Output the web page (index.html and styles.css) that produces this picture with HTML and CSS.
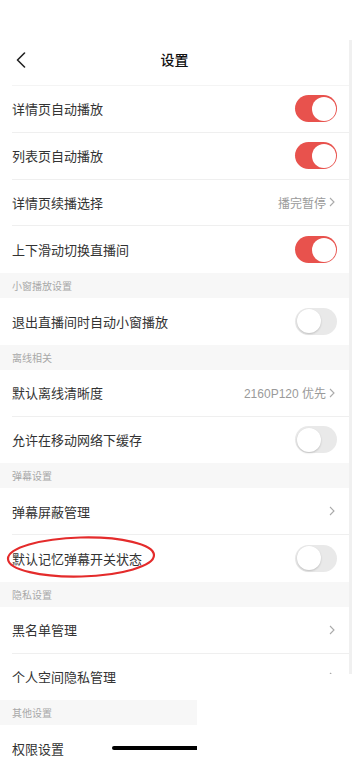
FILE: index.html
```html
<!DOCTYPE html>
<html lang="zh-CN">
<head>
    <meta charset="UTF-8">
    <meta name="viewport" content="width=device-width, initial-scale=1.0">
    <title>设置</title>
    <link rel="stylesheet" href="styles.css">
</head>
<body>
    <div class="status"></div>
    <div class="screen">
        <div class="nav">
            <svg class="nav__back" width="10" height="16" viewBox="0 0 10 16"><polyline points="8.5,1 1.5,8 8.5,15" fill="none" stroke="#222" stroke-width="1.6" stroke-linecap="round" stroke-linejoin="round"/></svg>
            <div class="nav__title">设置</div>
        </div>

        <div class="group">
            <div class="row"><span class="row__label">详情页自动播放</span><span class="switch switch--on"></span></div>
            <div class="row"><span class="row__label">列表页自动播放</span><span class="switch switch--on"></span></div>
            <div class="row"><span class="row__label">详情页续播选择</span><span class="row__value">播完暂停<svg class="chev" width="6" height="10" viewBox="0 0 6 10"><polyline points="1,1 5,5 1,9" fill="none" stroke="#aaa" stroke-width="1.1"/></svg></span></div>
            <div class="row"><span class="row__label">上下滑动切换直播间</span><span class="switch switch--on"></span></div>
        </div>

        <div class="section">小窗播放设置</div>
        <div class="group">
            <div class="row"><span class="row__label">退出直播间时自动小窗播放</span><span class="switch"></span></div>
        </div>

        <div class="section">离线相关</div>
        <div class="group">
            <div class="row"><span class="row__label">默认离线清晰度</span><span class="row__value">2160P120 优先<svg class="chev" width="6" height="10" viewBox="0 0 6 10"><polyline points="1,1 5,5 1,9" fill="none" stroke="#aaa" stroke-width="1.1"/></svg></span></div>
            <div class="row"><span class="row__label">允许在移动网络下缓存</span><span class="switch"></span></div>
        </div>

        <div class="section">弹幕设置</div>
        <div class="group">
            <div class="row"><span class="row__label">弹幕屏蔽管理</span><span class="row__value"><svg class="chev" width="6" height="10" viewBox="0 0 6 10"><polyline points="1,1 5,5 1,9" fill="none" stroke="#aaa" stroke-width="1.1"/></svg></span></div>
            <div class="row"><span class="row__label">默认记忆弹幕开关状态</span><span class="switch"></span></div>
        </div>

        <div class="section">隐私设置</div>
        <div class="group">
            <div class="row"><span class="row__label">黑名单管理</span><span class="row__value"><svg class="chev" width="6" height="10" viewBox="0 0 6 10"><polyline points="1,1 5,5 1,9" fill="none" stroke="#aaa" stroke-width="1.1"/></svg></span></div>
            <div class="row"><span class="row__label">个人空间隐私管理</span><span class="row__value"><svg class="chev" width="6" height="10" viewBox="0 0 6 10"><polyline points="1,1 5,5 1,9" fill="none" stroke="#aaa" stroke-width="1.1"/></svg></span></div>
        </div>

        <div class="section">其他设置</div>
        <div class="group">
            <div class="row"><span class="row__label">权限设置</span></div>
        </div>
    </div>

    <div class="cover"></div>
    <div class="home"></div>
    <svg class="mark" width="152" height="44" viewBox="0 0 152 44"><ellipse cx="76" cy="21" rx="73" ry="19.5" fill="none" stroke="#e42b2b" stroke-width="2.2" transform="rotate(-1.5 76 21)"/></svg>
</body>
</html>
```

FILE: styles.css
```css
*{
    padding: 0;
    margin: 0;
    box-sizing: border-box;
}
body{
    width: 352px;
    height: 758px;
    overflow: hidden;
    background-color: #fff;
    font-family: "Noto Sans CJK SC", "Noto Sans", sans-serif;
    color: #333;
    position: relative;
}
.status{
    height: 40px;
}
.screen{
    width: 352px;
    border-right: 3px solid #f0f0f0;
}
.nav{
    height: 46px;
    padding-bottom: 8px;
    display: flex;
    align-items: center;
    justify-content: center;
    position: relative;
    border-bottom: 1px solid #f4f4f4;
    margin-left: 12px;
}
.nav__back{
    position: absolute;
    left: 4px;
    top: 12px;
}
.nav__title{
    font-size: 14px;
    font-weight: 500;
    color: #111;
    margin-left: -12px;
}
.group{
    background-color: #fff;
}
.row{
    height: 46.75px;
    margin-left: 12px;
    padding-right: 12px;
    display: flex;
    align-items: center;
    justify-content: space-between;
    border-bottom: 1px solid #efefef;
}
.row:last-child{
    border-bottom: none;
}
.row__label{
    font-size: 13px;
}
.row__value{
    font-size: 12px;
    font-family: "Liberation Sans", "Noto Sans CJK SC", sans-serif;
    color: #9a9a9a;
    display: flex;
    align-items: center;
    gap: 3px;
    margin-right: 2px;
}
.section{
    height: 25px;
    line-height: 25px;
    padding-left: 12px;
    font-size: 10px;
    color: #a8a8a8;
    background-color: #f7f7f7;
}
.switch{
    width: 42px;
    height: 27px;
    border-radius: 14px;
    background-color: #e9e9e9;
    position: relative;
}
.switch::after{
    content: "";
    position: absolute;
    top: 1.5px;
    left: 1.5px;
    width: 24px;
    height: 24px;
    border-radius: 50%;
    background-color: #fff;
    box-shadow: 0 1px 2px rgba(0, 0, 0, 0.18);
}
.switch--on{
    background-color: #e8524d;
}
.switch--on::after{
    left: auto;
    right: 1.5px;
    box-shadow: none;
}
.cover{
    position: absolute;
    left: 197px;
    top: 674px;
    width: 155px;
    height: 84px;
    background-color: #fff;
}
.home{
    position: absolute;
    left: 112px;
    top: 746px;
    width: 85px;
    height: 4px;
    border-radius: 2px 0 0 2px;
    background-color: #000;
}
.mark{
    position: absolute;
    left: 5px;
    top: 536px;
}
```
